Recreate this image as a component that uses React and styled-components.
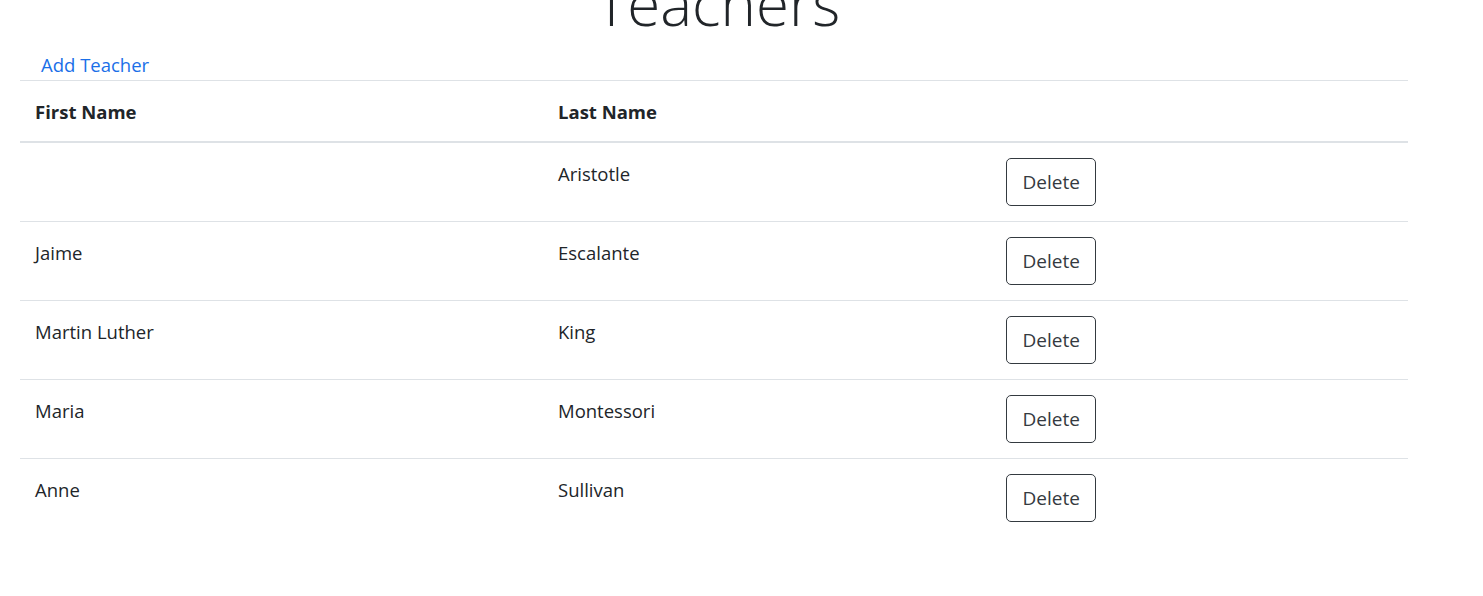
import React from "react";
import styled, { createGlobalStyle } from "styled-components";

const teachers = [
  { id: 1, firstName: "", lastName: "Aristotle" },
  { id: 2, firstName: "Jaime", lastName: "Escalante" },
  { id: 3, firstName: "Martin Luther", lastName: "King" },
  { id: 4, firstName: "Maria", lastName: "Montessori" },
  { id: 5, firstName: "Anne", lastName: "Sullivan" },
];

function App() {
  return (
    <>
      <GlobalStyle />
      <Page>
        <Title>Teachers</Title>
        <AddLink href="#">Add Teacher</AddLink>
        <Table>
          <colgroup>
            <Col $width="523px" />
            <Col $width="448px" />
            <Col />
          </colgroup>
          <thead>
            <tr>
              <Th>First Name</Th>
              <Th>Last Name</Th>
              <Th />
            </tr>
          </thead>
          <tbody>
            {teachers.map((t) => (
              <tr key={t.id}>
                <Td>{t.firstName}</Td>
                <Td>{t.lastName}</Td>
                <Td $action>
                  <DeleteButton>Delete</DeleteButton>
                </Td>
              </tr>
            ))}
          </tbody>
        </Table>
      </Page>
    </>
  );
}

export default App;

const GlobalStyle = createGlobalStyle`
  body {
    margin: 0;
    background: #fff;
    color: #212529;
    font-family: "Open Sans", "Noto Sans", sans-serif;
    font-size: 18.5px;
    line-height: 30px;
    overflow: hidden;
  }
`;

const Page = styled.div`
  display: flex;
  flex-direction: column;
  width: 1388px;
  margin-left: 20px;
`;

const Title = styled.h1`
  margin: -27px 0 0;
  font-size: 60px;
  line-height: 60px;
  font-weight: 300;
  text-align: center;
  padding-left: 8px;
`;

const AddLink = styled.a`
  align-self: flex-start;
  margin: 17px 0 0 21px;
  color: #1a6fe8;
  text-decoration: none;
  line-height: 30px;
`;

const Table = styled.table`
  width: 100%;
  table-layout: fixed;
  border-collapse: collapse;
`;

const Col = styled.col`
  width: ${(props) => props.$width || "auto"};
`;

const Th = styled.th`
  padding: 16px 15px 14px;
  text-align: left;
  font-weight: 700;
  border-top: 1px solid #dee2e6;
  border-bottom: 2px solid #dee2e6;
`;

const Td = styled.td`
  padding: ${(props) => (props.$action ? "15px" : "16px 15px 14px")};
  vertical-align: top;
  border-top: 1px solid #dee2e6;
`;

const DeleteButton = styled.button`
  display: block;
  height: 48px;
  padding: 0 15.5px;
  background: #fff;
  border: 1px solid #343a40;
  border-radius: 5px;
  color: #343a40;
  font-family: inherit;
  font-size: 19px;
  line-height: 30px;
  cursor: pointer;
`;
